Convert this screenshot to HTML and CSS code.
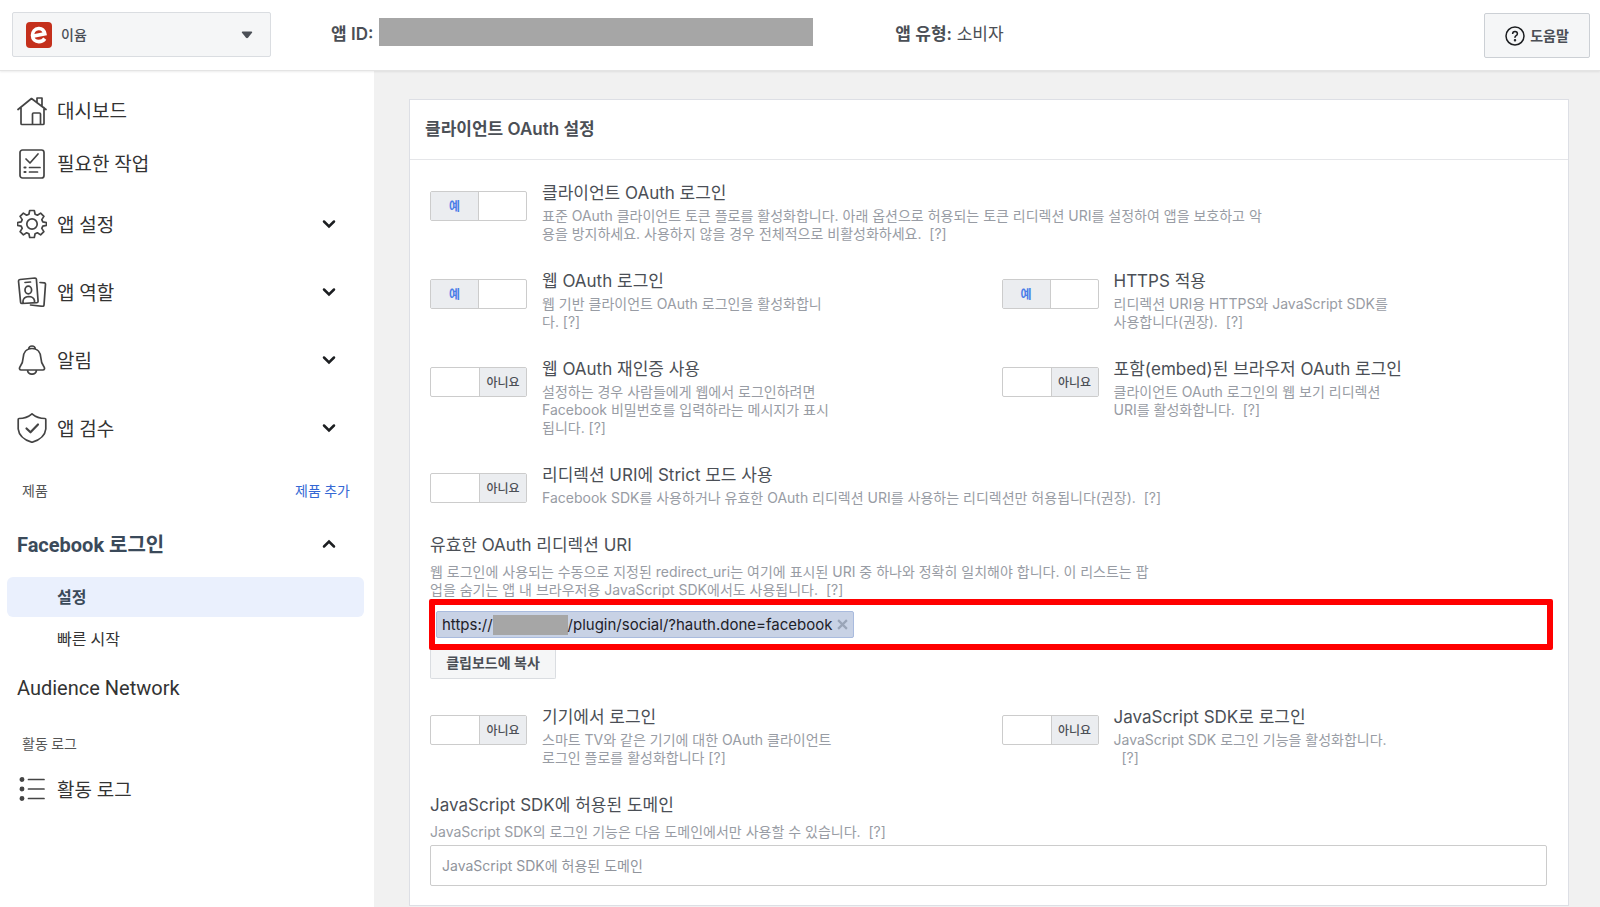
FILE: index.html
```html
<!DOCTYPE html>
<html lang="ko">
<head>
  <meta charset="UTF-8" />
  <meta name="viewport" content="width=device-width, initial-scale=1.0"/>
  <title>Facebook 로그인 - 설정</title>
  <link rel="stylesheet" href="styles.css">
</head>
<body>
  <header class="topbar">
    <div class="app-select">
      <span class="app-logo">
        <svg width="18" height="18" viewBox="0 0 18 18" fill="none" stroke="#fff" stroke-width="3.600"><path d="M2.500 10.300 14.800 7.800C14 4 11.500 2.300 8.500 2.500 5 2.800 2.500 5.600 2.500 9.300c0 4 2.800 6.300 6.300 6.300 2.700 0 4.600-1 6-3"/></svg>
      </span>
      <select aria-label="앱 선택"><option>이윰</option></select>
      <svg class="caret" width="12" height="8" viewBox="0 0 12 8"><path d="M1.500 0.500h9q1.200 0.200 0.500 1.300L7 6.700q-1 0.900-2 0L1 1.800Q0.300 0.700 1.500 0.500z" fill="#4b4f56"/></svg>
    </div>
    <div class="app-meta app-id"><strong>앱 ID:</strong><span class="mask"></span></div>
    <div class="app-meta app-type"><strong>앱 유형:</strong> 소비자</div>
    <button class="help" type="button">
      <svg width="20" height="20" viewBox="0 0 20 20" fill="none" stroke="#1c1e21" stroke-width="1.500"><circle cx="10" cy="10" r="9"/><path d="M7.600 8q0-2.600 2.400-2.600t2.400 2.300q0 1.200-1.300 2T10 11.900"/><circle cx="10" cy="14.200" r=".5" fill="#1c1e21"/></svg>
      <span>도움말</span>
    </button>
  </header>

  <div class="layout">
    <nav class="sidebar">
      <a class="item" href="#">
        <svg class="icon" viewBox="0 0 30 30"><path d="M1 13.500 14.500 2.500 29 13.500M4 11.500v16q0 1 1 1h21q1 0 1-1v-16M20 6V2h5v8M15.500 28V18q0-1 1-1h6q1 0 1 1v10"/></svg>
        <span>대시보드</span>
      </a>
      <a class="item" href="#">
        <svg class="icon" viewBox="0 0 30 30"><rect x="3" y="1" width="24" height="28" rx="2.500"/><path d="M9 10l4 4 8-9M12.500 18.500h10.500M12.500 23h8"/><path d="M7.500 18.500h1M7.500 23h1" stroke-width="2.200"/></svg>
        <span>필요한 작업</span>
      </a>
      <button class="item group" type="button">
        <svg class="icon" viewBox="0 0 30 30"><circle cx="15" cy="15" r="5.200"/><path d="M12.700 1.500h4.600l.8 3.700 2.300 1 3.200-2.100 3.300 3.300-2.100 3.200 1 2.300 3.700.8v2.600l-3.700.8-1 2.300 2.100 3.200-3.300 3.300-3.200-2.100-2.300 1-.8 3.700h-4.600l-.8-3.700-2.300-1-3.200 2.100-3.300-3.300 2.100-3.200-1-2.300-3.700-.8v-2.600l3.700-.8 1-2.300-2.100-3.200 3.300-3.300 3.200 2.100 2.300-1z"/></svg>
        <span>앱 설정</span>
        <svg class="chevron" viewBox="0 0 14 10"><path d="M2 2.500l5 5 5-5"/></svg>
      </button>
      <button class="item group" type="button">
        <svg class="icon" viewBox="0 0 30 30"><path d="M3 2.500 18 1q1.200 0 1.400 1.200l1.700 22q0 1.200-1.200 1.400L5 26.500q-1.200 0-1.400-1.200L1.500 4Q1.500 2.700 3 2.500zM8 5.500l5.500-.5M6 26v-2q.5-4 5.500-4.500 5 0 6 4v2"/><ellipse cx="11.300" cy="13" rx="3.300" ry="3.800"/><path d="M23 5.500l4.500.3q1 .2 1 1.300l-1.500 21q-.2 1.200-1.500 1.200l-12-1.300"/></svg>
        <span>앱 역할</span>
        <svg class="chevron" viewBox="0 0 14 10"><path d="M2 2.500l5 5 5-5"/></svg>
      </button>
      <button class="item group" type="button">
        <svg class="icon" viewBox="0 0 30 30"><path d="M15 3.500c-6 0-8.500 4.500-8.800 9-.2 5-1.200 6.500-3 9-1.400 2-.6 3.500 1 3.500h21.600c1.600 0 2.400-1.500 1-3.500-1.800-2.500-2.800-4-3-9-.3-4.500-2.800-9-8.800-9zM11.500 4.200q.5-3.200 3.500-3.200t3.500 3.200M10.500 25.200q.5 4 4.500 4t4.500-4"/></svg>
        <span>알림</span>
        <svg class="chevron" viewBox="0 0 14 10"><path d="M2 2.500l5 5 5-5"/></svg>
      </button>
      <button class="item group" type="button">
        <svg class="icon" viewBox="0 0 30 30"><path d="M15 .8q5.500 4.700 13 4.700.8 0 .8 1v9.500q-1 9.500-13.800 13.300Q2.200 25.500 1.200 16V6.500q0-1 .8-1Q9.500 5.500 15 .8z"/><path d="M9.500 15.500l4 3.800 7.500-7.800" stroke-width="2.200"/></svg>
        <span>앱 검수</span>
        <svg class="chevron" viewBox="0 0 14 10"><path d="M2 2.500l5 5 5-5"/></svg>
      </button>

      <div class="caption">제품 <a href="#">제품 추가</a></div>

      <button class="item product open" type="button">
        <span>Facebook 로그인</span>
        <svg class="chevron" viewBox="0 0 14 10"><path d="M2 7.500l5-5 5 5"/></svg>
      </button>
      <a class="sub active" href="#">설정</a>
      <a class="sub" href="#">빠른 시작</a>
      <a class="item product" href="#">Audience Network</a>

      <div class="caption">활동 로그</div>
      <a class="item log" href="#">
        <svg class="icon" viewBox="0 0 30 30"><path d="M11.500 5.500h15.500M11.500 15h15.500M11.500 24.500h15.500"/><g fill="#444"><circle cx="5" cy="5.500" r="1.600"/><circle cx="5" cy="15" r="1.600"/><circle cx="5" cy="24.500" r="1.600"/></g></svg>
        <span>활동 로그</span>
      </a>
    </nav>

    <main class="content">
      <section class="card">
        <h2>클라이언트 OAuth 설정</h2>
        <div class="card-body">
          <div class="option">
            <label class="toggle on"><input type="checkbox" id="client-oauth" checked><span>예</span></label>
            <div>
              <label class="title" for="client-oauth">클라이언트 OAuth 로그인</label>
              <p>표준 OAuth 클라이언트 토큰 플로를 활성화합니다. 아래 옵션으로 허용되는 토큰 리디렉션 URI를 설정하여 앱을 보호하고 악<br>용을 방지하세요. 사용하지 않을 경우 전체적으로 비활성화하세요. &nbsp;[?]</p>
            </div>
          </div>

          <div class="option-row">
            <div class="option">
              <label class="toggle on"><input type="checkbox" id="web-oauth" checked><span>예</span></label>
              <div>
                <label class="title" for="web-oauth">웹 OAuth 로그인</label>
                <p>웹 기반 클라이언트 OAuth 로그인을 활성화합니<br>다. [?]</p>
              </div>
            </div>
            <div class="option">
              <label class="toggle on"><input type="checkbox" id="https" checked><span>예</span></label>
              <div>
                <label class="title" for="https">HTTPS 적용</label>
                <p>리디렉션 URI용 HTTPS와 JavaScript SDK를<br>사용합니다(권장). &nbsp;[?]</p>
              </div>
            </div>
          </div>

          <div class="option-row">
            <div class="option">
              <label class="toggle"><input type="checkbox" id="reauth"><span>아니요</span></label>
              <div>
                <label class="title" for="reauth">웹 OAuth 재인증 사용</label>
                <p>설정하는 경우 사람들에게 웹에서 로그인하려면<br>Facebook 비밀번호를 입력하라는 메시지가 표시<br>됩니다. [?]</p>
              </div>
            </div>
            <div class="option">
              <label class="toggle"><input type="checkbox" id="embed"><span>아니요</span></label>
              <div>
                <label class="title" for="embed">포함(embed)된 브라우저 OAuth 로그인</label>
                <p>클라이언트 OAuth 로그인의 웹 보기 리디렉션<br>URI를 활성화합니다. &nbsp;[?]</p>
              </div>
            </div>
          </div>

          <div class="option">
            <label class="toggle"><input type="checkbox" id="strict"><span>아니요</span></label>
            <div>
              <label class="title" for="strict">리디렉션 URI에 Strict 모드 사용</label>
              <p>Facebook SDK를 사용하거나 유효한 OAuth 리디렉션 URI를 사용하는 리디렉션만 허용됩니다(권장). &nbsp;[?]</p>
            </div>
          </div>

          <div class="field">
            <h3 class="title">유효한 OAuth 리디렉션 URI</h3>
            <p>웹 로그인에 사용되는 수동으로 지정된 redirect_uri는 여기에 표시된 URI 중 하나와 정확히 일치해야 합니다. 이 리스트는 팝<br>업을 숨기는 앱 내 브라우저용 JavaScript SDK에서도 사용됩니다. &nbsp;[?]</p>
            <div class="uri-box">
              <span class="token">https://<span class="mask"></span>/plugin/social/?hauth.done=facebook
                <button type="button" aria-label="삭제"><svg width="11" height="11" viewBox="0 0 10 10"><path d="M1 1l8 8M9 1l-8 8" stroke="#9aa5b8" stroke-width="2"/></svg></button>
              </span>
            </div>
            <button class="copy" type="button">클립보드에 복사</button>
          </div>

          <div class="option-row">
            <div class="option">
              <label class="toggle"><input type="checkbox" id="device"><span>아니요</span></label>
              <div>
                <label class="title" for="device">기기에서 로그인</label>
                <p>스마트 TV와 같은 기기에 대한 OAuth 클라이언트<br>로그인 플로를 활성화합니다 [?]</p>
              </div>
            </div>
            <div class="option">
              <label class="toggle"><input type="checkbox" id="js-sdk"><span>아니요</span></label>
              <div>
                <label class="title" for="js-sdk">JavaScript SDK로 로그인</label>
                <p>JavaScript SDK 로그인 기능을 활성화합니다.<br>&nbsp; [?]</p>
              </div>
            </div>
          </div>

          <div class="field">
            <label class="title" for="domains">JavaScript SDK에 허용된 도메인</label>
            <p>JavaScript SDK의 로그인 기능은 다음 도메인에서만 사용할 수 있습니다. &nbsp;[?]</p>
            <input class="domains" type="text" id="domains" placeholder="JavaScript SDK에 허용된 도메인">
          </div>
        </div>
      </section>
    </main>
  </div>
</body>
</html>
```
FILE: styles.css
```css
* { box-sizing: border-box; }
body { margin: 0; background: #f1f1f1; color: #4b4f56; font-family: Inter, "Noto Sans CJK KR", sans-serif; font-size: 14px; }
button, select, input { font-family: inherit; color: inherit; }
button { cursor: pointer; }
a { color: inherit; text-decoration: none; }

.topbar { display: flex; align-items: flex-start; height: 71px; padding: 12px 10px 0 12px; background: #fff; border-bottom: 1px solid #e4e4e4; box-shadow: 0 1px 2px rgba(0, 0, 0, 0.08); position: relative; }
.app-select { display: flex; align-items: center; width: 259px; height: 45px; padding: 0 17px 0 13px; background: #f5f6f7; border: 1px solid #dadde1; border-radius: 2px; }
.app-logo { display: flex; align-items: center; justify-content: center; width: 26px; height: 26px; border-radius: 4px; background: #c4301c; }
.app-select select { flex: 1; margin-left: 9px; padding: 0; appearance: none; border: 0; background: none; font-size: 14px; font-weight: 500; }
.app-meta { display: flex; align-items: center; height: 40px; font-size: 17px; white-space: pre; }
.app-meta strong { font-weight: 600; }
.app-id { margin-left: 60px; }
.app-type { margin-left: 82px; }
.mask { display: inline-block; background: #a6a6a6; }
.app-id .mask { width: 434px; height: 28px; margin-left: 6px; }
.help { display: flex; align-items: center; justify-content: center; gap: 5px; width: 106px; height: 45px; margin: 1px 0 0 auto; background: #f5f6f7; border: 1px solid #ccd0d5; border-radius: 2px; font-size: 14px; font-weight: 600; }
.help span { padding-bottom: 2px; }

.layout { display: flex; align-items: stretch; }
.sidebar { flex: 0 0 374px; padding-top: 13px; background: #fff; color: #333; font-family: Roboto, "Noto Sans CJK KR", sans-serif; min-height: calc(100vh - 71px); }
.item { display: flex; align-items: center; width: 100%; height: 53px; padding: 0 38px 0 17px; border: 0; background: none; font-size: 19px; text-align: left; }
.item span { padding-bottom: 2px; }
.icon { width: 30px; height: 30px; margin-right: 10px; fill: none; stroke: #444; stroke-width: 1.7; stroke-linecap: round; stroke-linejoin: round; }
.group { height: 68px; }
.chevron { width: 14px; height: 10px; margin-left: auto; fill: none; stroke: #1c1e21; stroke-width: 2.5; stroke-linecap: round; }
.product { height: 54px; font-size: 20px; }
.open { height: 50px; margin-bottom: 8px; font-weight: bold; color: #3b4a5a; }
.log { height: 34px; }
.caption { display: flex; justify-content: space-between; align-items: center; height: 57px; padding: 0 24px 2px 22px; font-size: 14px; color: #555; }
.caption a { color: #3568d4; }
.sub { display: flex; align-items: center; height: 44px; margin: 0 10px 0 7px; padding: 0 0 2px 50px; border-radius: 6px; font-size: 16px; }
.sub.active { height: 40px; background: #eaf0fd; color: #3b4a5a; font-weight: bold; }

.content { flex: 1; padding: 28px 31px 0 35px; }
.card { background: #fff; border: 1px solid #dddfe5; }
.card h2 { margin: 0; height: 60px; padding: 0 15px; border-bottom: 1px solid #e5e6e9; font-size: 17px; font-weight: 600; line-height: 58px; }
.card-body { display: flex; flex-direction: column; gap: 26px; padding: 21px 21px 19px 20px; }
.title { display: block; margin: 0; font-size: 17px; font-weight: normal; line-height: 24px; }
p { margin: 2px 0 0; font-size: 14px; line-height: 18px; color: #989ca4; white-space: nowrap; }
.option { display: flex; align-items: flex-start; gap: 15px; }
.option-row { display: grid; grid-template-columns: 1fr 1fr; gap: 26px; }
.toggle { flex: 0 0 97px; display: flex; justify-content: flex-end; height: 30px; margin-top: 10px; background: #fff; border: 1px solid #ccc; border-radius: 2px; }
.toggle input { position: absolute; opacity: 0; }
.toggle span { width: 47px; border-left: 1px solid #ccc; background: #ebedf0; font-size: 12px; font-weight: 500; line-height: 29px; text-align: center; }
.toggle.on { justify-content: flex-start; }
.toggle.on span { width: 48px; border-left: 0; border-right: 1px solid #ccc; color: #4a7de8; font-weight: 600; }
.field p { margin-top: 6px; }
.uri-box { display: flex; align-items: center; height: 51px; margin: 0 -6px 0 -1px; padding-left: 1px; border: 6px solid #f00; border-radius: 2px; }
.token { display: flex; align-items: center; height: 27px; padding: 0 5px; background: #c8d2e5; border: 1px solid #a9bbde; border-radius: 2px; color: #1d2129; font-size: 15px; }
.token .mask { width: 75px; height: 20px; }
.token button { display: flex; margin-left: 5px; padding: 0; border: 0; background: none; }
.copy { display: block; width: 126px; height: 29px; padding: 0 0 4px; background: #f5f6f7; border: 1px solid #dadde1; border-top: 0; border-radius: 0 0 2px 2px; font-size: 14px; font-weight: 600; }
.domains { display: block; width: 100%; height: 41px; margin-top: 4px; padding: 0 11px; border: 1px solid #ccc; border-radius: 2px; font-size: 14px; }
.domains::placeholder { color: #90949c; opacity: 1; }
```
